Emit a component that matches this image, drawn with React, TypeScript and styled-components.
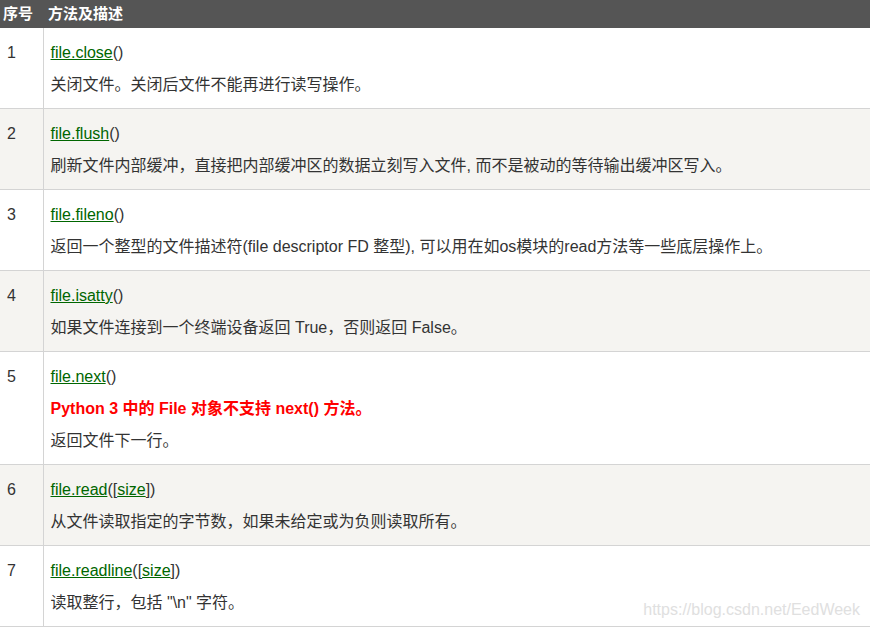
import React from "react";
import styled, { createGlobalStyle } from "styled-components";

const Global = createGlobalStyle`
  html, body { margin: 0; padding: 0; background: #fff; }
  body { font-family: "Liberation Sans", Arial, "Noto Sans CJK SC", sans-serif; color: #333; }
`;

const Page = styled.div`
  position: relative;
  width: 870px;
  overflow: hidden;
`;

const Table = styled.table`
  width: 870px;
  border-collapse: collapse;
  table-layout: fixed;
  font-size: 16px;
`;

const HeadCell = styled.th<{ $first?: boolean }>`
  background: #555;
  color: #fff;
  font-weight: bold;
  font-size: 15px;
  height: 28px;
  padding: 0 0 0 ${(p) => (p.$first ? "3px" : "5px")};
  text-align: left;
  line-height: 28px;
  box-sizing: border-box;
`;

const Row = styled.tr<{ $alt?: boolean }>`
  background: ${(p) => (p.$alt ? "#f5f4f1" : "#fff")};
  border-bottom: 1px solid #d4d4d4;
`;

const NumCell = styled.td`
  vertical-align: top;
  padding: 9px 0 7px 7px;
  line-height: 32px;
  border-right: 1px solid #d4d4d4;
  box-sizing: border-box;
`;

const DescCell = styled.td`
  vertical-align: top;
  padding: 9px 0 7px 7px;
  line-height: 32px;
`;

const Line = styled.div`
  white-space: nowrap;
`;

const Warn = styled.div`
  color: #ff0000;
  font-weight: bold;
  white-space: nowrap;
`;

const Link = styled.a`
  color: #006600;
  text-decoration: underline;
`;

const Watermark = styled.div`
  position: absolute;
  right: 10px;
  bottom: 7px;
  font-size: 16px;
  color: #e0e0e0;
  line-height: 20px;
  pointer-events: none;
`;

type Item = { n: number; method: React.ReactNode; warn?: string; desc: string };

const items: Item[] = [
  { n: 1, method: <><Link>file.close</Link>()</>, desc: "关闭文件。关闭后文件不能再进行读写操作。" },
  { n: 2, method: <><Link>file.flush</Link>()</>, desc: "刷新文件内部缓冲，直接把内部缓冲区的数据立刻写入文件, 而不是被动的等待输出缓冲区写入。" },
  { n: 3, method: <><Link>file.fileno</Link>()</>, desc: "返回一个整型的文件描述符(file descriptor FD 整型), 可以用在如os模块的read方法等一些底层操作上。" },
  { n: 4, method: <><Link>file.isatty</Link>()</>, desc: "如果文件连接到一个终端设备返回 True，否则返回 False。" },
  { n: 5, method: <><Link>file.next</Link>()</>, warn: "Python 3 中的 File 对象不支持 next() 方法。", desc: "返回文件下一行。" },
  { n: 6, method: <><Link>file.read</Link>([<Link>size</Link>])</>, desc: "从文件读取指定的字节数，如果未给定或为负则读取所有。" },
  { n: 7, method: <><Link>file.readline</Link>([<Link>size</Link>])</>, desc: "读取整行，包括 \"\\n\" 字符。" },
];

export default function App() {
  return (
    <Page>
      <Global />
      <Table>
        <colgroup>
          <col style={{ width: 43 }} />
          <col />
        </colgroup>
        <thead>
          <tr>
            <HeadCell $first>序号</HeadCell>
            <HeadCell>方法及描述</HeadCell>
          </tr>
        </thead>
        <tbody>
          {items.map((it, i) => (
            <Row key={it.n} $alt={i % 2 === 1}>
              <NumCell>{it.n}</NumCell>
              <DescCell>
                <Line>{it.method}</Line>
                {it.warn && <Warn>{it.warn}</Warn>}
                <Line>{it.desc}</Line>
              </DescCell>
            </Row>
          ))}
        </tbody>
      </Table>
      <Watermark>https://blog.csdn.net/EedWeek</Watermark>
    </Page>
  );
}
